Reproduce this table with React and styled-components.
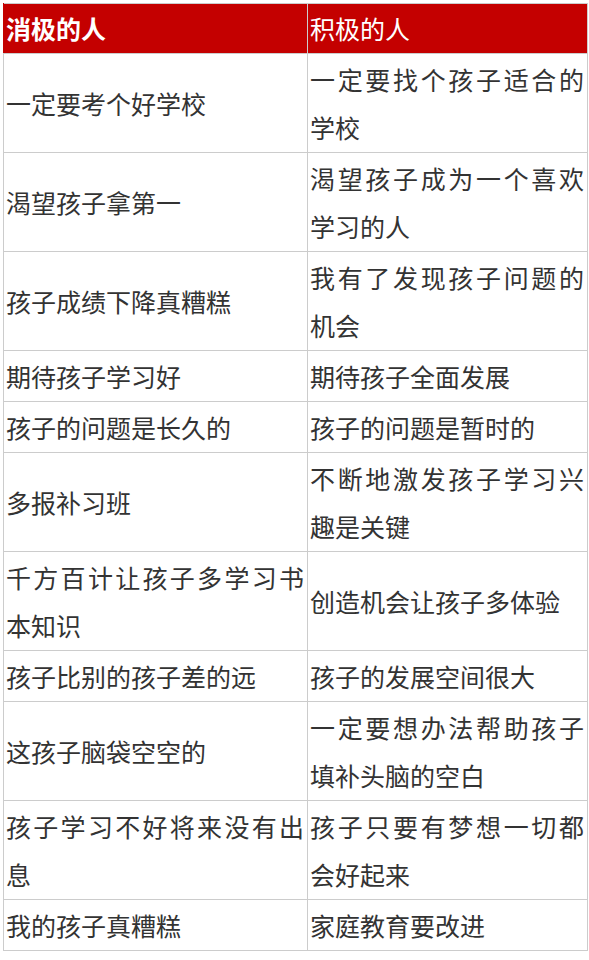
import React from "react";
import styled, { createGlobalStyle } from "styled-components";

const Global = createGlobalStyle`
  html, body { margin: 0; padding: 0; background: #fff; }
  body {
    font-family: "Noto Sans CJK SC", "Noto Sans", sans-serif;
  }
`;

const Page = styled.div`
  padding: 3px 2px 3px 3px;
`;

const Table = styled.table`
  border-collapse: collapse;
  table-layout: fixed;
  width: 584px;
  border: 1px solid #cccccc;
`;

const HeadCell = styled.th`
  background: #c40000;
  color: #ffffff;
  font-size: 25px;
  line-height: 47px;
  font-weight: ${(p) => (p.$bold ? 700 : 400)};
  text-align: left;
  padding: 1px 3px 1px 2px;
  border: 1px solid #cccccc;
  border-top: none;
  border-left-color: ${(p) => (p.$first ? "#c40000" : "#e8b0b0")};
`;

const Cell = styled.td`
  font-size: 25px;
  line-height: 48px;
  color: #333333;
  text-align: justify;
  vertical-align: middle;
  padding: 1px 3px 1px 2px;
  border: 1px solid #cccccc;
  word-break: break-all;
`;

const rows = [
  ["一定要考个好学校", "一定要找个孩子适合的学校"],
  ["渴望孩子拿第一", "渴望孩子成为一个喜欢学习的人"],
  ["孩子成绩下降真糟糕", "我有了发现孩子问题的机会"],
  ["期待孩子学习好", "期待孩子全面发展"],
  ["孩子的问题是长久的", "孩子的问题是暂时的"],
  ["多报补习班", "不断地激发孩子学习兴趣是关键"],
  ["千方百计让孩子多学习书本知识", "创造机会让孩子多体验"],
  ["孩子比别的孩子差的远", "孩子的发展空间很大"],
  ["这孩子脑袋空空的", "一定要想办法帮助孩子填补头脑的空白"],
  ["孩子学习不好将来没有出息", "孩子只要有梦想一切都会好起来"],
  ["我的孩子真糟糕", "家庭教育要改进"],
];

export default function App() {
  return (
    <Page>
      <Global />
      <Table>
        <colgroup>
          <col style={{ width: 304 }} />
          <col style={{ width: 280 }} />
        </colgroup>
        <thead>
          <tr>
            <HeadCell $bold $first>消极的人</HeadCell>
            <HeadCell>积极的人</HeadCell>
          </tr>
        </thead>
        <tbody>
          {rows.map(([a, b], i) => (
            <tr key={i}>
              <Cell>{a}</Cell>
              <Cell>{b}</Cell>
            </tr>
          ))}
        </tbody>
      </Table>
    </Page>
  );
}
